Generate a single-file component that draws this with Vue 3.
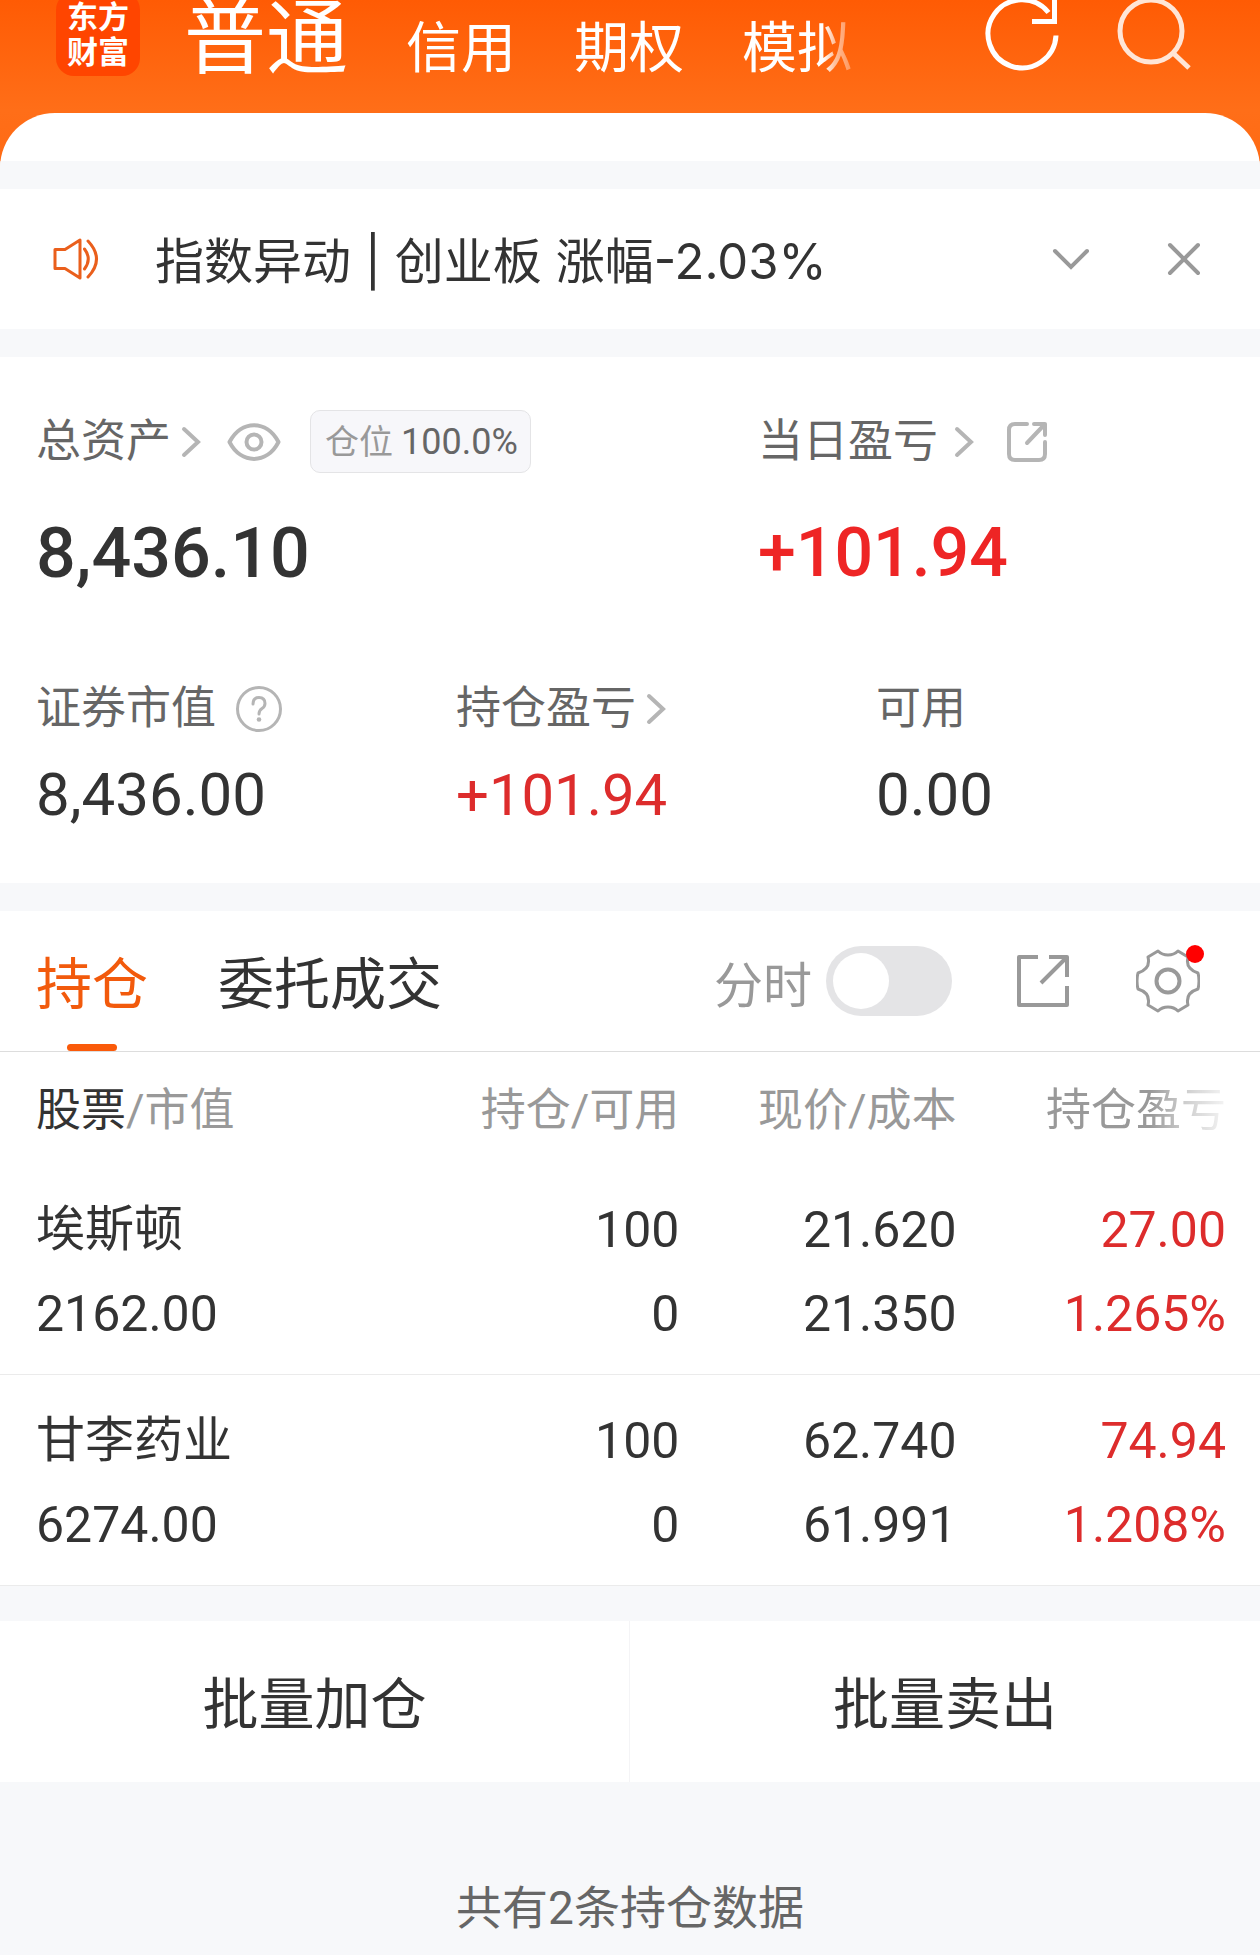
<script setup>
import { ref } from 'vue'

const showIntraday = ref(false)
const otherAccounts = ['信用', '期权', '模拟']
const holdings = [
  { name: '埃斯顿', value: '2162.00', shares: '100', free: '0', price: '21.620', cost: '21.350', profit: '27.00', rate: '1.265%' },
  { name: '甘李药业', value: '6274.00', shares: '100', free: '0', price: '62.740', cost: '61.991', profit: '74.94', rate: '1.208%' },
]
</script>

<template>
  <div class="page">
    <header class="header">
      <div class="logo"><span>东方</span><span>财富</span></div>
      <nav class="accounts">
        <button type="button" class="account account-current">普通</button>
        <button v-for="name in otherAccounts" :key="name" type="button" class="account">{{ name }}</button>
      </nav>
      <div class="header-tools">
        <button type="button" aria-label="刷新">
          <svg width="76" height="84" viewBox="0 0 76 84" fill="none" stroke="#fff" stroke-width="5">
            <path d="M72 43.500A34 34 0 1 1 64.500 20.500" />
            <path d="M70.500 4V29.500H48" />
          </svg>
        </button>
        <button type="button" aria-label="搜索">
          <svg width="76" height="84" viewBox="0 0 76 84" fill="none" stroke="#ffe5d6" stroke-width="5">
            <circle cx="35" cy="39" r="31" />
            <path d="M56 60L73 76" />
          </svg>
        </button>
      </div>
    </header>

    <main class="sheet">
      <section class="notice">
        <svg class="speaker" width="50" height="44" viewBox="0 0 50 44" fill="none" stroke="#ea5f1c" stroke-width="3" stroke-linejoin="round" stroke-linecap="round">
          <path d="M3 12.500H13L28 3V41L13 31.500H3Z" />
          <path d="M32.500 12Q40 22 32.500 32" />
          <path d="M36 4Q53 22 36 40" />
        </svg>
        <p class="notice-text">指数异动 | 创业板 涨幅-2.03%</p>
        <button type="button" aria-label="展开">
          <svg width="40" height="40" viewBox="0 0 40 40" fill="none" stroke="#999" stroke-width="4" stroke-linecap="round">
            <path d="M4 12L20 28L36 12" />
          </svg>
        </button>
        <button type="button" aria-label="关闭">
          <svg width="40" height="40" viewBox="0 0 40 40" fill="none" stroke="#999" stroke-width="4" stroke-linecap="round">
            <path d="M6 6L34 34M34 6L6 34" />
          </svg>
        </button>
      </section>

      <section class="assets">
        <div class="totals">
          <div>
            <div class="label label-tall">
              <a href="#" class="link">总资产
                <svg class="arrow arrow-near" width="20" height="32" viewBox="0 0 20 32"><path d="M3 3L17 16L3 29" /></svg>
              </a>
              <button type="button" class="eye" aria-label="显示或隐藏金额">
                <svg width="54" height="40" viewBox="0 0 54 40" fill="none" stroke="#b5b5b5" stroke-width="4">
                  <path d="M2.500 20C14 -2.500 40 -2.500 51.500 20C40 42.500 14 42.500 2.500 20Z" stroke-linejoin="round" />
                  <circle cx="27" cy="20" r="7.500" />
                </svg>
              </button>
              <span class="ratio"><span class="ratio-name">仓位</span>100.0%</span>
            </div>
            <div class="figure-total">8,436.10</div>
          </div>
          <div>
            <div class="label label-tall">
              <a href="#" class="link">当日盈亏
                <svg class="arrow arrow-far" width="20" height="32" viewBox="0 0 20 32"><path d="M3 3L17 16L3 29" /></svg>
              </a>
              <button type="button" class="share" aria-label="分享">
                <svg width="42" height="42" viewBox="0 0 42 42" fill="none" stroke="#b5b5b5" stroke-width="4" stroke-linecap="round" stroke-linejoin="round">
                  <path d="M21 3H9Q3 3 3 9V33Q3 39 9 39H33Q39 39 39 33V21" />
                  <path d="M28 3H39V14M39 3L21 22" />
                </svg>
              </button>
            </div>
            <div class="figure-total gain gain-total">+101.94</div>
          </div>
        </div>

        <div class="details">
          <div>
            <div class="label">证券市值
              <button type="button" class="help" aria-label="说明">
                <svg width="48" height="48" viewBox="0 0 48 48" fill="none" stroke="#b5b5b5" stroke-width="3" stroke-linecap="round">
                  <circle cx="24" cy="24" r="21.500" />
                  <path d="M18 19Q18 12.500 24 12.500Q30 12.500 30 18.500Q30 21.500 27 23.500Q24 25.500 24 29" />
                  <circle cx="24" cy="34.500" r="2.300" fill="#b5b5b5" stroke="none" />
                </svg>
              </button>
            </div>
            <div class="figure">8,436.00</div>
          </div>
          <div>
            <div class="label">
              <a href="#" class="link">持仓盈亏
                <svg class="arrow arrow-near" width="20" height="32" viewBox="0 0 20 32"><path d="M3 3L17 16L3 29" /></svg>
              </a>
            </div>
            <div class="figure gain gain-holding">+101.94</div>
          </div>
          <div>
            <div class="label">可用</div>
            <div class="figure">0.00</div>
          </div>
        </div>
      </section>

      <section class="holdings">
        <div class="toolbar">
          <div class="tabs">
            <button type="button" class="tab tab-current">持仓</button>
            <button type="button" class="tab">委托成交</button>
          </div>
          <label class="intraday">分时<input v-model="showIntraday" type="checkbox" class="switch" /></label>
          <button type="button" class="export" aria-label="导出">
            <svg width="58" height="58" viewBox="0 0 58 58" fill="none" stroke="#999" stroke-width="4" stroke-linejoin="round">
              <path d="M24 5H5V53H53V34" />
              <path d="M35 5H53V25M53 5L27 31" />
            </svg>
          </button>
          <button type="button" class="settings" aria-label="设置">
            <svg width="64" height="64" viewBox="0 0 64 64" fill="none" stroke="#999" stroke-width="3" stroke-linejoin="round">
              <path d="M22 2Q26 6 32 6Q38 6 42 2L52 8Q49 20 62 24Q64 32 62 40Q49 44 52 56L42 62Q38 58 32 58Q26 58 22 62L12 56Q15 44 2 40Q0 32 2 24Q15 20 12 8Z" />
              <circle cx="32" cy="32" r="11.500" stroke-width="4" />
            </svg>
            <span class="dot"></span>
          </button>
        </div>

        <table class="table">
          <colgroup>
            <col class="col-stock" />
            <col class="col-mid" />
            <col class="col-mid" />
            <col />
          </colgroup>
          <thead>
            <tr>
              <th scope="col"><span class="strong">股票</span>/市值</th>
              <th scope="col">持仓/可用</th>
              <th scope="col">现价/成本</th>
              <th scope="col"><span class="fading">持仓盈亏</span></th>
            </tr>
          </thead>
          <tbody>
            <tr v-for="row in holdings" :key="row.name">
              <td><div class="name">{{ row.name }}</div><div>{{ row.value }}</div></td>
              <td><div>{{ row.shares }}</div><div>{{ row.free }}</div></td>
              <td><div>{{ row.price }}</div><div>{{ row.cost }}</div></td>
              <td class="gain"><div>{{ row.profit }}</div><div>{{ row.rate }}</div></td>
            </tr>
          </tbody>
        </table>
      </section>

      <div class="batch">
        <button type="button">批量加仓</button>
        <button type="button">批量卖出</button>
      </div>

      <p class="summary">共有2条持仓数据</p>
    </main>
  </div>
</template>

<style>
body {
  background: #f7f8fa;
}
</style>

<style scoped>
.page {
  display: flow-root;
  overflow: hidden;
  background: linear-gradient(#ff5b04, #ff6e18 110px, #ff6a14 170px);
  color: #333;
  font-family: Roboto, "Noto Sans CJK SC", sans-serif;
}

button {
  margin: 0;
  padding: 0;
  border: 0;
  background: none;
  color: inherit;
  font: inherit;
}

svg {
  display: block;
}

p {
  margin: 0;
}

.header {
  display: flex;
  align-items: flex-start;
  height: 121px;
  margin-top: -8px;
  padding: 0 68px 0 56px;
  color: #fff;
}

.logo {
  display: flex;
  flex-direction: column;
  align-items: center;
  justify-content: center;
  box-sizing: border-box;
  width: 84px;
  height: 84px;
  padding-top: 2px;
  border-radius: 18px;
  background: #ff4500;
  font-size: 31px;
  font-weight: 700;
  line-height: 35px;
}

.accounts {
  display: flex;
  flex: 1;
  align-items: baseline;
  gap: 58px;
  margin-left: 44px;
}

.account {
  font-size: 55px;
  line-height: 94px;
}

.account-current {
  font-size: 82px;
}

.account:last-child {
  mask-image: linear-gradient(to right, #000 74%, rgb(0 0 0 / 60%) 84%, rgb(0 0 0 / 30%));
}

.header-tools {
  display: flex;
  gap: 56px;
}

.sheet {
  overflow: hidden;
  padding-top: 48px;
  border-radius: 55px 55px 0 0;
  background: #fff;
}

.notice {
  display: flex;
  align-items: center;
  height: 140px;
  padding: 0 56px 0 52px;
  border-top: 28px solid #f7f8fa;
  border-bottom: 28px solid #f7f8fa;
}

.notice-text {
  flex: 1;
  margin-left: 53px;
  padding-top: 6px;
  font-family: Inter, "Noto Sans CJK SC", sans-serif;
  font-size: 49px;
  line-height: 64px;
}

.notice button + button {
  margin-left: 73px;
}

.assets {
  padding: 53px 0 56px;
  border-bottom: 28px solid #f7f8fa;
}

.totals {
  display: grid;
  grid-template-columns: 722fr 502fr;
  padding-left: 36px;
}

.details {
  display: grid;
  grid-template-columns: repeat(3, 1fr);
  margin-top: 92px;
}

.details > div {
  padding-left: 36px;
}

.label {
  display: flex;
  align-items: center;
  height: 48px;
  color: #666;
  font-size: 45px;
  line-height: 48px;
}

.label-tall {
  height: 63px;
}

.link {
  display: flex;
  align-items: center;
  color: inherit;
  text-decoration: none;
}

.arrow {
  fill: none;
  stroke: #b5b5b5;
  stroke-width: 4px;
  stroke-linecap: round;
}

.arrow-near {
  margin-left: 10px;
}

.arrow-far {
  margin-left: 16px;
}

.eye {
  margin-left: 26px;
}

.share {
  margin-left: 32px;
}

.help {
  margin-left: 19px;
}

.ratio {
  display: flex;
  align-items: center;
  gap: 8px;
  box-sizing: border-box;
  height: 63px;
  margin-left: 29px;
  padding: 0 12px 0 14px;
  border: 1px solid #e4e4e6;
  border-radius: 10px;
  background: #f7f7fa;
  font-size: 36px;
}

.ratio-name {
  color: #999;
  font-size: 34px;
}

.figure-total {
  margin-top: 40px;
  font-size: 70px;
  font-weight: 500;
  line-height: 80px;
}

.figure {
  margin-top: 30px;
  font-size: 60px;
  line-height: 64px;
}

.gain {
  color: #dd2c2c;
}

.gain-total {
  color: #ee2525;
  font-size: 68px;
}

.gain-holding {
  font-size: 58px;
}

.toolbar {
  display: flex;
  align-items: center;
  height: 140px;
  padding: 0 60px 0 36px;
  border-bottom: 1px solid #ddd;
}

.tabs {
  display: flex;
  flex: 1;
  align-self: stretch;
  gap: 70px;
}

.tab {
  position: relative;
  padding-bottom: 4px;
  font-size: 56px;
}

.tab-current {
  color: #f25a0c;
}

.tab-current::after {
  position: absolute;
  bottom: 0;
  left: 50%;
  width: 50px;
  height: 7px;
  margin-left: -25px;
  border-radius: 4px;
  background: #fa5a0a;
  content: "";
}

.intraday {
  display: flex;
  align-items: center;
  gap: 14px;
  color: #999;
  font-size: 49px;
}

.switch {
  display: flex;
  align-items: center;
  box-sizing: border-box;
  width: 126px;
  height: 70px;
  margin: 0;
  padding: 0 7px;
  border-radius: 35px;
  background: #e4e4e6;
  appearance: none;
}

.switch::before {
  width: 56px;
  height: 56px;
  border-radius: 50%;
  background: #fff;
  content: "";
}

.switch:checked {
  justify-content: flex-end;
  background: #fa5a0a;
}

.export {
  margin-left: 62px;
}

.settings {
  position: relative;
  margin-left: 64px;
}

.dot {
  position: absolute;
  top: -4px;
  right: -4px;
  width: 18px;
  height: 18px;
  border-radius: 50%;
  background: #f00;
}

.table {
  width: 100%;
  border-collapse: collapse;
  table-layout: fixed;
  font-size: 50px;
  line-height: 84px;
  text-align: right;
}

.col-stock {
  width: 32%;
}

.col-mid {
  width: 22%;
}

.table th,
.table td {
  padding: 24px 0 18px;
  border-bottom: 1px solid #ebebeb;
  font-weight: 400;
}

.table th {
  padding: 17px 0 11px;
  border: 0;
  color: #999;
  font-size: 45px;
}

.table tr > * {
  padding-right: 2px;
}

.table tr > :first-child {
  padding-left: 36px;
  text-align: left;
}

.table tr > :nth-child(2),
.table tr > :nth-child(3) {
  padding-right: 1px;
}

.table tr > :last-child {
  padding-right: 34px;
}

.table .strong {
  color: #333;
}

.table .name {
  font-size: 49px;
}

.fading {
  display: inline-block;
  mask-image: linear-gradient(to right, #000 58%, rgb(0 0 0 / 50%) 76%, rgb(0 0 0 / 10%));
}

.batch {
  display: grid;
  grid-template-columns: 1fr 1fr;
  border-top: 35px solid #f7f8fa;
}

.batch button {
  height: 161px;
  padding-bottom: 4px;
  font-size: 56px;
}

.batch button:first-child {
  border-right: 1px solid #f4f4f6;
}

.summary {
  padding: 94px 0 16px;
  background: #f7f8fa;
  color: #666;
  font-size: 46px;
  line-height: 64px;
  text-align: center;
}
</style>
